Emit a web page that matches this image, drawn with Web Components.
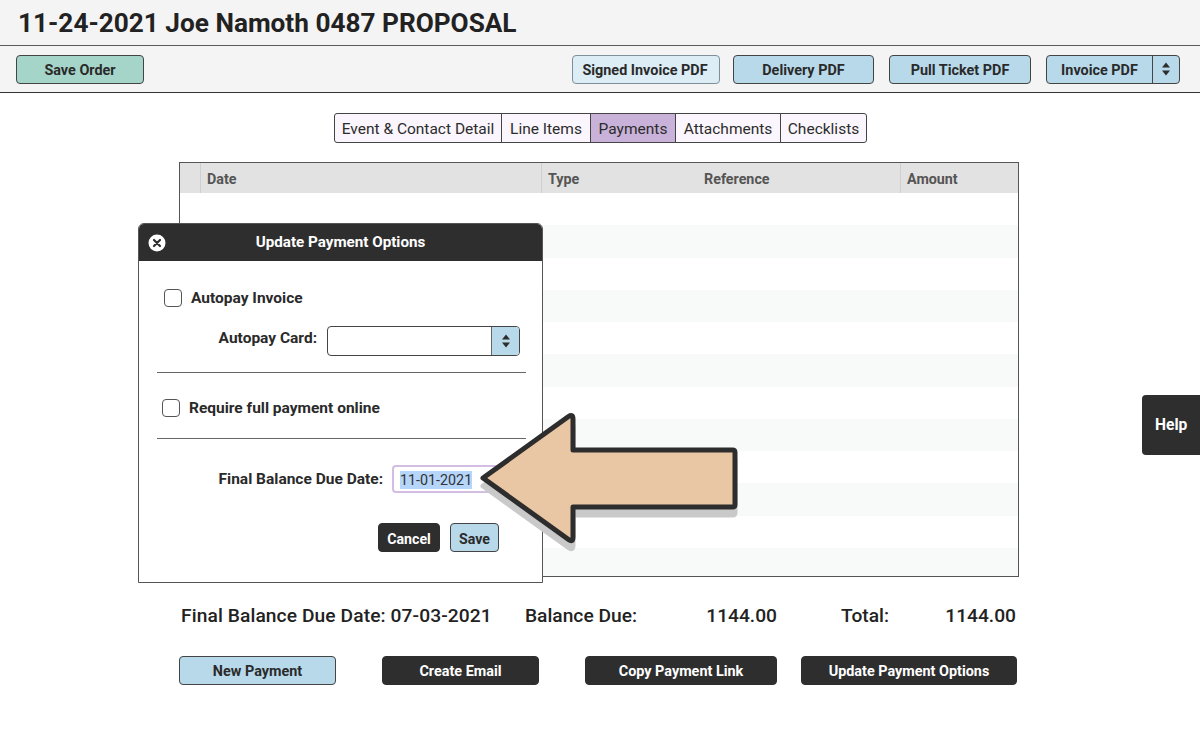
<!DOCTYPE html>
<html>
<head>
<meta charset="utf-8">
<title>Payments</title>
<style>
  html, body { margin: 0; padding: 0; background: #fff; }
  body { font-family: Roboto, "Liberation Sans", sans-serif; color: #222; width: 1200px; height: 732px; overflow: hidden; position: relative; }
</style>
</head>
<body>
<order-title>11-24-2021 Joe Namoth 0487 PROPOSAL</order-title>
<order-toolbar>
  <ui-button slot="left" kind="green" style="width:128px">Save Order</ui-button>
  <ui-button kind="pale" style="width:148px;padding-right:2px">Signed Invoice PDF</ui-button>
  <ui-button kind="blue" style="width:141px;margin-left:13px">Delivery PDF</ui-button>
  <ui-button kind="blue" style="width:142px;margin-left:15px">Pull Ticket PDF</ui-button>
  <ui-split style="margin-left:15px">Invoice PDF</ui-split>
</order-toolbar>
<tab-bar active="Payments"></tab-bar>
<payments-table></payments-table>
<summary-row></summary-row>
<action-row>
  <ui-button kind="blue" style="width:157px">New Payment</ui-button>
  <ui-button kind="dark" style="width:157px;margin-left:46px">Create Email</ui-button>
  <ui-button kind="dark" style="width:192px;margin-left:46px">Copy Payment Link</ui-button>
  <ui-button kind="dark" style="width:216px;margin-left:24px">Update Payment Options</ui-button>
</action-row>
<payment-modal></payment-modal>
<callout-arrow></callout-arrow>
<help-tab>Help</help-tab>

<script>
// Small helper so every element gets an open shadow root from a string
class Base extends HTMLElement {
  connectedCallback() {
    if (this.shadowRoot) return;
    this.attachShadow({ mode: 'open' });
    this.shadowRoot.innerHTML = this.markup();
  }
}

const stepper = `<svg width="10" height="16" viewBox="0 0 10 16"><path d="M5 1.5 9 6.5H1Z M5 14.5 1 9.5H9Z" fill="#2d2d2d"/></svg>`;

class OrderTitle extends Base {
  markup() {
    return `<style>
      :host { display: block; height: 45px; background: #f4f4f4; border-bottom: 1px solid #5a5a5a; }
      h1 { margin: 0; padding: 7px 0 0 18px; font: 700 26.2px/32px Roboto, sans-serif; color: #222; }
    </style><h1><slot></slot></h1>`;
  }
}

class OrderToolbar extends Base {
  markup() {
    return `<style>
      :host { display: flex; align-items: center; justify-content: space-between; height: 46px; padding: 0 20px 0 16px; background: #f4f4f4; border-bottom: 1px solid #333; }
      .right { display: flex; align-items: center; }
    </style><slot name="left"></slot><div class="right"><slot></slot></div>`;
  }
}

class UiButton extends Base {
  markup() {
    return `<style>
      :host { display: inline-flex; align-items: center; justify-content: center; box-sizing: border-box; height: 29px; padding-top: 2px; border-radius: 4px; border: 1px solid #444; font: 700 14.4px Roboto, sans-serif; color: #2a2a2a; background: #b8d9ea; }
      :host([kind=green]) { background: #a5d5c9; }
      :host([kind=pale]) { background: #dcedf6; border-color: #7f8f98; }
      :host([kind=dark]) { background: #2e2e2f; color: #fff; border-color: #2e2e2f; }
    </style><slot></slot>`;
  }
}

class UiSplit extends Base {
  markup() {
    return `<style>
      :host { display: inline-flex; box-sizing: border-box; height: 29px; width: 134px; border: 1px solid #444; border-radius: 4px; background: #b8d9ea; font: 700 14.4px Roboto, sans-serif; color: #2a2a2a; }
      .label { flex: 1; display: flex; align-items: center; justify-content: center; padding-top: 2px; border-right: 1px solid #444; }
      .step { width: 26px; display: flex; align-items: center; justify-content: center; }
    </style><div class="label"><slot></slot></div><div class="step">${stepper}</div>`;
  }
}

class TabBar extends Base {
  markup() {
    const tabs = [['Event & Contact Detail', 166], ['Line Items', 89], ['Payments', 85], ['Attachments', 105], ['Checklists', 86]];
    const active = this.getAttribute('active');
    return `<style>
      :host { display: flex; justify-content: center; padding: 20px 0 19px 1px; }
      .bar { display: flex; height: 30px; box-sizing: border-box; border: 1px solid #444; border-radius: 3px; background: #fbf6fd; overflow: hidden; }
      .tab { display: flex; align-items: center; justify-content: center; box-sizing: border-box; padding-top: 2px; font: 400 15.5px Roboto, sans-serif; color: #2c2c2c; border-left: 1px solid #444; }
      .tab:first-child { border-left: 0; }
      .tab.on { background: #c9b2d9; }
    </style><div class="bar">${tabs.map(([t, w]) =>
      `<div class="tab${t === active ? ' on' : ''}" style="width:${w}px">${t.replace('&', '&amp;')}</div>`).join('')}</div>`;
  }
}

class PaymentsTable extends Base {
  markup() {
    const rows = Array.from({ length: 12 }, () => '<div class="row"></div>').join('');
    return `<style>
      :host { display: block; box-sizing: border-box; width: 840px; height: 415px; margin-left: 179px; border: 1px solid #555; overflow: hidden; }
      .head { display: grid; grid-template-columns: 21px 341px 162px 197px 1fr; height: 30px; background: #e2e2e2; font: 700 14.3px Roboto, sans-serif; color: #555; }
      .head div { display: flex; align-items: center; padding: 2px 0 0 6px; border-right: 1px solid #cfcfcf; }
      .head div:nth-child(3) { border-right: 0; }
      .head div:nth-child(4) { padding-left: 0; }
      .head div:last-child { border-right: 0; }
      .row { height: 32.25px; }
      .row:nth-child(even) { background: #f8f9f9; }
    </style>
    <div class="head"><div></div><div>Date</div><div>Type</div><div>Reference</div><div>Amount</div></div>
    <div class="body">${rows}</div>`;
  }
}

class SummaryRow extends Base {
  markup() {
    return `<style>
      :host { display: grid; grid-template-columns: 344px 150px 102px 111px 1fr; align-items: center; width: 835px; height: 24px; margin: 26px 0 0 181px; font: 500 19.2px Roboto, sans-serif; color: #222; }
      .num { text-align: right; }
      .tot { padding-left: 64px; }
      .date { letter-spacing: .1px; }
    </style>
    <div class="date">Final Balance Due Date: 07-03-2021</div>
    <div>Balance Due:</div>
    <div class="num">1144.00</div>
    <div class="tot">Total:</div>
    <div class="num">1144.00</div>`;
  }
}

class ActionRow extends Base {
  markup() {
    return `<style>
      :host { display: flex; align-items: center; margin: 29px 0 0 179px; }
    </style><slot></slot>`;
  }
}

class PaymentModal extends Base {
  markup() {
    return `<style>
      :host { position: absolute; left: 138px; top: 223px; width: 405px; height: 360px; box-sizing: border-box; display: flex; flex-direction: column; background: #fff; border: 1px solid #555; border-radius: 6px 6px 0 0; font: 700 15.5px Roboto, "Liberation Sans", sans-serif; color: #2a2a2a; }
      header { display: flex; align-items: center; height: 37px; flex: none; padding-bottom: 2px; box-sizing: border-box; background: #2e2e2f; border-radius: 5px 5px 0 0; color: #fff; font-size: 15.2px; position: relative; justify-content: center; }
      header svg { position: absolute; left: 9px; top: 10px; }
      .body { padding: 0 16px 0 18px; display: flex; flex-direction: column; }
      .check { display: flex; align-items: center; gap: 9px; }
      .check div:last-child { height: 18px; line-height: 19px; }
      .box { width: 18px; height: 18px; box-sizing: border-box; border: 1.5px solid #555; border-radius: 4px; background: #fff; }
      .card { display: flex; align-items: center; margin-top: 19px; }
      .card label { width: 160px; text-align: right; padding-bottom: 7px; }
      .select { display: flex; margin-left: 10px; width: 193px; height: 30px; box-sizing: border-box; border: 1px solid #444; border-top-width: 1.5px; border-radius: 4px; overflow: hidden; }
      .select i { flex: 1; border-right: 1px solid #666; }
      .select b { width: 27px; background: #b8d9ea; display: flex; align-items: center; justify-content: center; }
      hr { border: 0; border-top: 1px solid #666; margin: 0; height: 0; }
      .due { display: flex; align-items: center; margin-top: 26px; }
      .due label { width: 226px; text-align: right; }
      .date { margin-left: 9px; width: 110px; height: 28px; box-sizing: border-box; border: 2px solid #d3bde2; border-radius: 4px; display: flex; align-items: center; padding: 2px 0 0 6px; font: 400 14.3px Roboto, sans-serif; color: #333; }
      .date span { background: #b5d5fb; line-height: 18px; }
      .actions { display: flex; justify-content: flex-end; gap: 10px; margin: 30px 27px 0 0; }
      ui-button { font-size: 14.2px; }
    </style>
    <header>
      <svg width="18" height="18" viewBox="0 0 18 18"><circle cx="9" cy="9" r="8.5" fill="#fff"/><path d="M6 6 12 12M12 6 6 12" stroke="#2e2e2f" stroke-width="2.2" stroke-linecap="round"/></svg>
      Update Payment Options
    </header>
    <div class="body">
      <div class="check" style="margin-top:28px"><div class="box" style="margin-left:7px"></div><div>Autopay Invoice</div></div>
      <div class="card"><label>Autopay Card:</label><div class="select"><i></i><b>${stepper}</b></div></div>
      <hr style="margin-top:16px">
      <div class="check" style="margin-top:26px"><div class="box" style="margin-left:5px"></div><div>Require full payment online</div></div>
      <hr style="margin-top:21px">
      <div class="due"><label>Final Balance Due Date:</label><div class="date"><span>11-01-2021</span></div></div>
      <div class="actions"><ui-button kind="dark" style="width:62px">Cancel</ui-button><ui-button kind="blue" style="width:49px">Save</ui-button></div>
    </div>`;
  }
}

class CalloutArrow extends Base {
  markup() {
    const d = 'M483 478 568.5 416.5Q573 413.5 573 419V450H732.5Q735 450 735 452.5V504.5Q735 507 732.5 507H573V537Q573 543 568.5 539.5Z';
    return `<style>
      :host { position: absolute; left: 470px; top: 400px; width: 280px; height: 160px; }
      svg { display: block; }
    </style>
    <svg width="280" height="160" viewBox="470 400 280 160">
      <path d="${d}" transform="translate(0 8)" fill="#c9c9c9" stroke="#c9c9c9" stroke-width="5" stroke-linejoin="round"/>
      <path d="${d}" fill="#e9c6a4" stroke="#2d2d2d" stroke-width="5" stroke-linejoin="round"/>
    </svg>`;
  }
}

class HelpTab extends Base {
  markup() {
    return `<style>
      :host { position: absolute; right: 0; top: 395px; width: 58px; height: 60px; box-sizing: border-box; padding: 0 0 1px 13px; display: flex; align-items: center; background: #2e2e2f; border-radius: 4px 0 0 4px; color: #fff; font: 700 15.6px Roboto, sans-serif; }
    </style><slot></slot>`;
  }
}

customElements.define('order-title', OrderTitle);
customElements.define('order-toolbar', OrderToolbar);
customElements.define('ui-button', UiButton);
customElements.define('ui-split', UiSplit);
customElements.define('tab-bar', TabBar);
customElements.define('payments-table', PaymentsTable);
customElements.define('summary-row', SummaryRow);
customElements.define('action-row', ActionRow);
customElements.define('payment-modal', PaymentModal);
customElements.define('callout-arrow', CalloutArrow);
customElements.define('help-tab', HelpTab);
</script>
</body>
</html>
